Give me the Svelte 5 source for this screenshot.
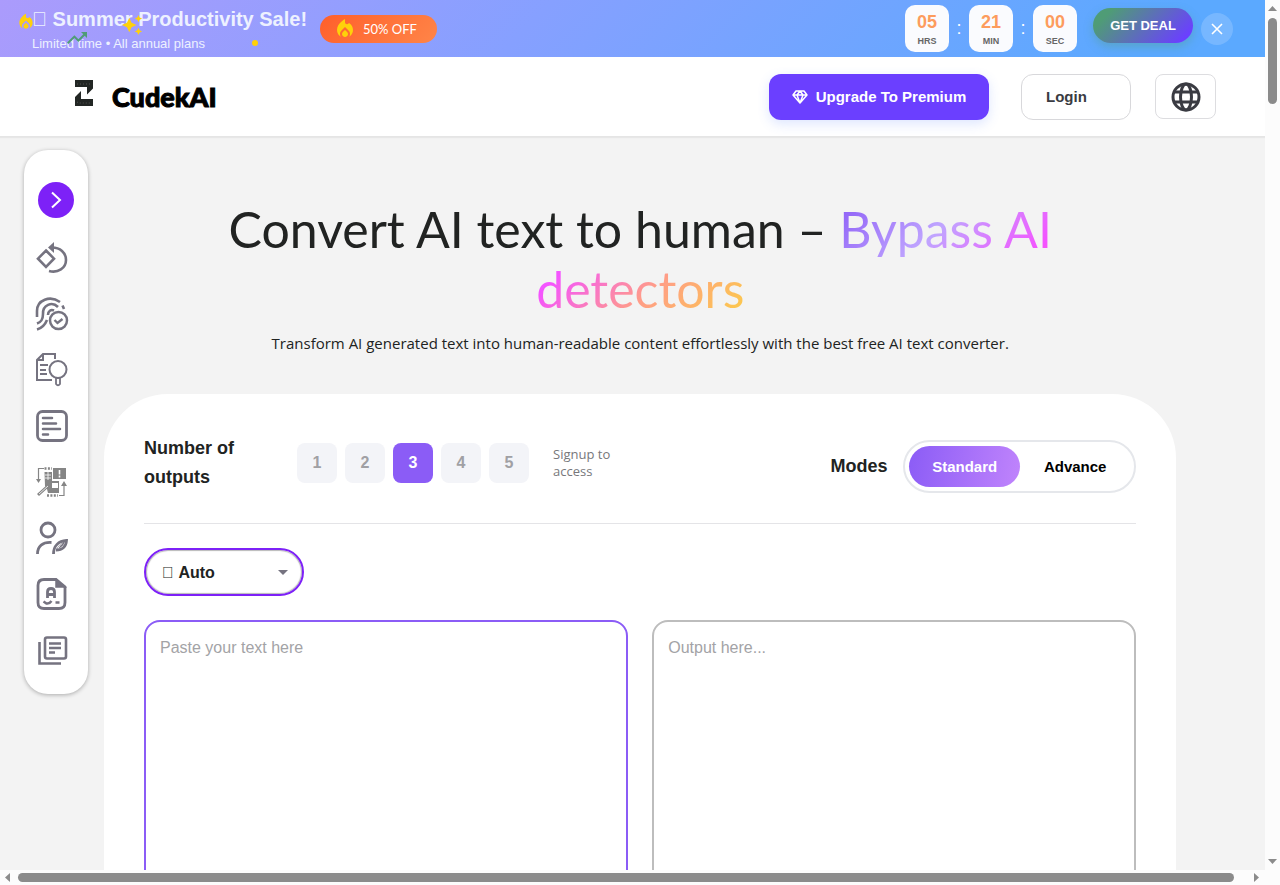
<script>
  let selected = $state(3);
  let mode = $state('Standard');
  const counts = [1, 2, 3, 4, 5];
  const countdown = [
    { value: '05', unit: 'HRS' },
    { value: '21', unit: 'MIN' },
    { value: '00', unit: 'SEC' }
  ];
</script>

{#snippet flame(size)}
  <svg width={size} height={size} viewBox="0 0 24 24" fill="#ffd10a" aria-hidden="true">
    <path d="m12 12.9-2.13 2.09c-.56.56-.87 1.29-.87 2.07C9 18.68 10.35 20 12 20s3-1.32 3-2.94c0-.78-.31-1.52-.87-2.07L12 12.9z" />
    <path d="m16 6-.44.55C14.38 8.02 12 7.19 12 5.3V2S4 6 4 13c0 2.92 1.56 5.47 3.89 6.86-.56-.79-.89-1.76-.89-2.8 0-1.32.52-2.56 1.47-3.5L12 10.1l3.53 3.47c.95.93 1.47 2.17 1.47 3.5 0 1.02-.31 1.96-.85 2.75 1.89-1.15 3.29-3.06 3.71-5.3.66-3.55-1.07-6.9-3.86-8.52z" />
  </svg>
{/snippet}

<div class="frame">
  <div class="page">
    <section class="banner">
      <div class="decor flame">{@render flame(20)}</div>
      <div class="decor sparkle">
        <svg width="22" height="22" viewBox="0 0 24 24" fill="#ffd10a" aria-hidden="true"><path d="m19 9 1.25-2.75L23 5l-2.75-1.25L19 1l-1.25 2.75L15 5l2.75 1.25L19 9zm-7.5.5L9 4 6.5 9.5 1 12l5.5 2.5L9 20l2.5-5.5L17 12l-5.500-2.500zM19 15l-1.250 2.750L15 19l2.750 1.250L19 23l1.250-2.750L23 19l-2.750-1.250L19 15z" /></svg>
      </div>
      <div class="decor trend">
        <svg width="24" height="24" viewBox="0 0 24 24" fill="#4f9c76" aria-hidden="true"><path d="m16 6 2.29 2.29-4.88 4.88-4-4L2 16.59 3.41 18l6-6 4 4 6.3-6.29L22 12V6z" /></svg>
      </div>
      <div class="decor dot"></div>

      <div class="promo">
        <strong>&#xE000; Summer Productivity Sale!</strong>
        <span>Limited time • All annual plans</span>
      </div>
      <div class="badge">{@render flame(24)}<span>50% OFF</span></div>

      <div class="countdown">
        {#each countdown as part, i}
          {#if i > 0}<span class="colon">:</span>{/if}
          <div class="tick"><b>{part.value}</b><small>{part.unit}</small></div>
        {/each}
      </div>
      <button class="deal">GET DEAL</button>
      <button class="close" aria-label="Close">
        <svg width="14" height="14" viewBox="0 0 14 14" stroke="#fff" stroke-width="1.6" aria-hidden="true"><path d="M2 2l10 10M12 2L2 12" /></svg>
      </button>
    </section>

    <header>
      <a class="brand" href="#home">
        <svg width="20" height="26" viewBox="0 0 20 26" aria-hidden="true">
          <path d="M1 0h18v8.500l-6 6V7H1z M1 26h18v-7H7v-8l-6 6z" fill="#222624" />
          <path d="M3 4h13M3 22l2 1h12" stroke="#666" stroke-width=".7" stroke-dasharray="1 2" fill="none" />
        </svg>
        <span>CudekAI</span>
      </a>
      <button class="upgrade">
        <svg width="16" height="16" viewBox="0 0 16 16" fill="none" stroke="#fff" stroke-width="1.500" stroke-linejoin="round" aria-hidden="true"><path d="M4 2h8l3 4-7 8-7-8zM1 6h14M8 2L5 6l3 8 3-8z" /></svg>
        Upgrade To Premium
      </button>
      <button class="login">Login</button>
      <button class="lang" aria-label="Language">
        <svg width="30" height="30" viewBox="0 0 30 30" fill="none" stroke="#3a3b42" stroke-width="3" aria-hidden="true"><circle cx="15" cy="15" r="13" /><ellipse cx="15" cy="15" rx="5.500" ry="13" /><path d="M3 10h24M3 20h24" /></svg>
      </button>
    </header>

    <main>
      <nav aria-label="Tools">
        <button class="expand" aria-label="Expand">
          <svg width="36" height="36" viewBox="0 0 36 36" fill="none" stroke="#fff" stroke-width="2" aria-hidden="true"><path d="M14 10.500l8 7.500-8 7.500" /></svg>
        </button>
        <a href="#humanize" aria-label="Humanize">
          <svg viewBox="0 0 32 32" aria-hidden="true"><path d="M10 8.500l8 8.200-8 8.200-8-8.200z" stroke-width="2.600" /><path d="M16 5.500c8 0 14 5 14 12.500 0 8-8 13.500-17 11" stroke-width="2.600" /><path d="M18 0v11l-6-5.500z" fill="#757380" stroke="none" /></svg>
        </a>
        <a href="#detector" aria-label="Detector">
          <svg viewBox="0 0 32 32" aria-hidden="true"><circle cx="22.500" cy="22.500" r="8.500" /><path d="M18.500 22l3 3 5-4" stroke-width="2.400" /><path d="M1 19v-6C1 2 14-3 24 4M26.500 7.500l1.500 3.500M7 16c-.5-9 9-13 15-7M12 17c0-4 3-6 6-4.500M7 16c0 6-2 8-6 9.500M11 22c-2 5-5 8-10 9.500" stroke-width="2.600" /></svg>
        </a>
        <a href="#plagiarism" aria-label="Plagiarism">
          <svg viewBox="0 0 32 32" aria-hidden="true"><path d="M19 5V0H7L1 6v20h15M7 0v6H1M4 11h8M4 16h6M4 20h7" stroke-width="2" /><circle cx="22" cy="15.500" r="8.500" stroke-width="2" /><path d="M20 24v6q2 2.500 4 0v-6z" stroke-width="1.800" /></svg>
        </a>
        <a href="#essay" aria-label="Essay">
          <svg viewBox="0 0 32 32" aria-hidden="true"><rect x="1.500" y="1.500" width="29" height="29" rx="5" stroke-width="2.800" /><path d="M7 8h9M7 13.500h13M7 19h17M7 24.500h5" stroke-width="2.500" stroke-linecap="round" /></svg>
        </a>
        <a href="#workflow" aria-label="Workflow">
          <svg viewBox="0 0 32 32" aria-hidden="true"><g fill="#858585" stroke="none"><path d="M17 2h13v11H17zM8.500 6H16v9h7v12H12l-1-4-2-3zM0 13h5l-2.500 4zM25 20h6l-3-5z" /></g><g stroke="#858585" stroke-width="1.200"><path d="M2.500 14V2.500H8M28 20v9.500h-5" /><path d="M2 29l11-10" stroke-width="3" /><path d="M8.500 2.500H16M11 29.500h11" stroke-width="2.400" stroke-dasharray="2 1.400" /></g><g stroke="#fff" stroke-width="1.200"><path d="M9 9h6M9 12h6M12 6v8" stroke-width=".8" /><path d="M23.500 4v4.500M23.500 9.500v2" stroke-width="1.600" /><path d="M3 28l9-8" stroke-width=".8" /></g><path d="M16 17h6v5h-6z" fill="#fff" stroke="none" /></svg>
        </a>
        <a href="#author" aria-label="Author">
          <svg viewBox="0 0 32 32" aria-hidden="true"><circle cx="12" cy="8" r="7" stroke-width="2.800" /><path d="M1.500 32c0-8 5-12 14-11.500" stroke-width="2.800" /><path d="M17.500 32c0-8 5-13 13-13.500-.5 7-4 9.500-10.500 9.500" stroke-width="2.800" /><path d="M20 28q3-6 9-9-1 6-9 9z" fill="#757380" stroke="none" /><path d="M22 26.500q1.500-3 4-5" stroke="#fff" stroke-width="1" /></svg>
        </a>
        <a href="#grade" aria-label="Grading">
          <svg viewBox="0 0 32 32" aria-hidden="true"><path d="M20 1.500H8q-6 0-6 6v17q0 6 6 6h15q6 0 6-6V9z" stroke-width="2.800" /><path d="M20 1.500V9h9z" fill="#757380" stroke-width="1.500" /><path d="M11.500 20v-6q0-3.500 3.500-3.500t3.500 3.500v6M11 16.500h8" stroke-width="2.800" /><path d="M7.500 23.500l3 2q3 .5 5-2.500M19.500 24.500h4" stroke-width="2.400" /></svg>
        </a>
        <a href="#library" aria-label="Library">
          <svg viewBox="0 0 32 32" aria-hidden="true"><rect x="9" y="3.500" width="21" height="21" rx="2" stroke-width="2.600" /><path d="M3.500 8v21.500H25" stroke-width="2.600" /><path d="M13 9.500h12M13 14h12M13 18.500h6" stroke-width="2.400" /></svg>
        </a>
      </nav>

      <div class="content">
        <div class="hero">
          <h1>Convert AI text to human – <span>Bypass AI detectors</span></h1>
          <p>Transform AI generated text into human-readable content effortlessly with the best free AI text converter.</p>
        </div>

        <section class="card">
          <div class="options">
            <div class="outputs">
              <h2>Number of outputs</h2>
              <div class="numbers">
                {#each counts as n}
                  <button class:active={selected === n} onclick={() => (selected = n)}>{n}</button>
                {/each}
              </div>
              <p>Signup to access</p>
            </div>
            <div class="modes">
              <h2>Modes</h2>
              <div class="switch">
                {#each ['Standard', 'Advance'] as name}
                  <button class:active={mode === name} onclick={() => (mode = name)}>{name}</button>
                {/each}
              </div>
            </div>
          </div>

          <div class="select">
            <select aria-label="Language of the text"><option>&#xE000; Auto</option></select>
            <svg width="10" height="5" viewBox="0 0 10 5" aria-hidden="true"><path d="M0 0h10L5 5z" fill="#757380" /></svg>
          </div>

          <div class="editors">
            <textarea class="input" aria-label="Your text" placeholder="Paste your text here"></textarea>
            <textarea aria-label="Output" placeholder="Output here..." readonly></textarea>
          </div>
        </section>
      </div>
    </main>
  </div>

  <div class="bar vertical" aria-hidden="true">
    <svg width="9" height="5" viewBox="0 0 9 5"><path d="M0 5h9L4.500 0z" /></svg>
    <i></i>
    <svg class="last" width="9" height="5" viewBox="0 0 9 5"><path d="M0 0h9L4.500 5z" /></svg>
  </div>
  <div class="bar horizontal" aria-hidden="true">
    <svg width="5" height="9" viewBox="0 0 5 9"><path d="M5 0v9L0 4.500z" /></svg>
    <i></i>
    <svg class="last" width="5" height="9" viewBox="0 0 5 9"><path d="M0 0v9l5-4.500z" /></svg>
  </div>
</div>

<style>
  :global(body) {
    margin: 0;
    background: #f3f3f3;
  }
  .frame,
  .frame * {
    box-sizing: border-box;
  }
  .frame {
    display: grid;
    grid-template: minmax(0, 1fr) 15px / minmax(0, 1fr) 15px;
    height: 100vh;
    background: #fcfcfc;
    color: #212322;
    font-family: 'Liberation Sans', Arial, sans-serif;
  }
  button,
  select,
  textarea {
    font-family: inherit;
    cursor: pointer;
  }
  button {
    padding: 0;
    border: 0;
    background: none;
  }
  svg {
    display: block;
    flex: none;
  }
  h1,
  h2,
  p {
    margin: 0;
  }
  .page {
    display: flex;
    flex-direction: column;
    overflow: hidden;
    background: #f3f3f3;
  }

  .banner {
    position: relative;
    flex: none;
    display: flex;
    align-items: center;
    height: 57px;
    padding: 0 32px;
    background: linear-gradient(135deg, #ab9bfc 0%, #86a0ff 42%, #5ba9ff 90%);
    color: #fff;
  }
  .decor {
    position: absolute;
  }
  .decor.flame {
    left: 16px;
    top: 12px;
  }
  .sparkle {
    left: 121px;
    top: 14px;
  }
  .trend {
    left: 65px;
    top: 26px;
  }
  .dot {
    left: 252px;
    top: 40px;
    width: 6px;
    height: 6px;
    border-radius: 50%;
    background: #ffd10a;
  }
  .promo {
    display: flex;
    flex-direction: column;
    width: 272px;
    margin-right: 16px;
    white-space: nowrap;
    color: #edf1ff;
  }
  .promo strong {
    font-size: 20px;
    line-height: 30px;
  }
  .promo span {
    font-size: 13px;
    line-height: 20px;
  }
  .badge {
    display: flex;
    align-items: center;
    gap: 6px;
    height: 28px;
    padding: 0 20px 0 13px;
    border-radius: 14px;
    background: linear-gradient(135deg, #ff5f2b, #ff8548);
    font: 13px/28px Lato, sans-serif;
    white-space: nowrap;
  }
  .countdown {
    display: flex;
    align-items: center;
    margin-left: auto;
  }
  .colon {
    width: 20px;
    text-align: center;
    font-size: 18px;
  }
  .tick {
    display: flex;
    flex-direction: column;
    align-items: center;
    width: 44px;
    height: 47px;
    padding-top: 6px;
    border-radius: 10px;
    background: #fafbfe;
  }
  .tick b {
    color: #fd9c5d;
    font-size: 18px;
    line-height: 22px;
  }
  .tick small {
    color: #666;
    font-size: 9px;
    line-height: 16px;
    font-weight: 700;
  }
  .deal {
    align-self: flex-start;
    width: 100px;
    height: 35px;
    margin: 8px 8px 0 16px;
    border-radius: 18px;
    background: linear-gradient(135deg, #4f9c76 15%, #6b3fff 90%);
    box-shadow: 0 4px 10px #4f9c7660;
    color: #fff;
    font-size: 13px;
    font-weight: 700;
  }
  .close {
    display: grid;
    place-items: center;
    width: 32px;
    height: 32px;
    border-radius: 50%;
    background: #ffffff2c;
  }

  header {
    position: relative;
    flex: none;
    display: flex;
    align-items: center;
    height: 80px;
    padding: 0 49px 0 74px;
    border-bottom: 1px solid #e5e5e5;
    background: #fff;
    box-shadow: 0 1px 1px #0000000c;
  }
  .brand {
    display: flex;
    align-items: flex-start;
    gap: 18px;
    margin-right: auto;
    color: #000;
    font: 900 27px/34px Lato, sans-serif;
    -webkit-text-stroke: 1px #000;
    text-decoration: none;
  }
  .upgrade {
    display: flex;
    align-items: center;
    justify-content: center;
    gap: 8px;
    width: 220px;
    height: 46px;
    margin-right: 32px;
    border-radius: 12px;
    background: #6b3fff;
    box-shadow: 0 4px 12px #5078ff30;
    color: #fff;
    font-size: 15px;
    font-weight: 700;
  }
  .login {
    width: 110px;
    height: 46px;
    margin-right: 24px;
    padding-left: 24px;
    border: 1px solid #d8d8db;
    border-radius: 12px;
    color: #3a3b42;
    font-size: 15px;
    font-weight: 700;
    text-align: left;
  }
  .lang {
    display: grid;
    place-items: center;
    width: 61px;
    height: 45px;
    border: 1px solid #dddde0;
    border-radius: 8px;
  }

  main {
    flex: 1;
    display: grid;
    grid-template-columns: 64px minmax(0, 1fr);
    align-items: start;
    gap: 16px;
    padding: 0 7% 0 24px;
  }
  nav {
    display: flex;
    flex-direction: column;
    align-items: center;
    gap: 24px;
    margin-top: 13px;
    padding: 32px 0 28px;
    border-radius: 24px;
    background: #fff;
    box-shadow: 0 1px 4px #0000004d;
  }
  nav a {
    margin-right: 8px;
  }
  nav a svg {
    width: 32px;
    height: 32px;
    overflow: visible;
    fill: none;
    stroke: #757380;
    stroke-width: 2.5px;
  }
  .expand {
    border-radius: 50%;
    background: #7d21f7;
  }

  .hero {
    padding: 62px 0 39px;
    text-align: center;
  }
  h1 {
    max-width: 860px;
    margin: 0 auto 12px;
    font: 400 50px/60px Lato, sans-serif;
  }
  h1 span {
    background: linear-gradient(135deg, #8b5cf6 0%, #c0a5ff 27%, #f453ff 52%, #ff9e86 75%, #fcc94c 98%);
    background-clip: text;
    -webkit-background-clip: text;
    color: transparent;
  }
  .hero p {
    font: 15px/24px 'Open Sans', sans-serif;
  }

  .card {
    min-height: 900px;
    padding: 40px;
    border-radius: 64px;
    background: #fff;
  }
  .options {
    display: flex;
    justify-content: space-between;
    padding-bottom: 30px;
    border-bottom: 1px solid #e4e4e7;
  }
  .outputs,
  .modes {
    display: flex;
    align-items: center;
  }
  .outputs {
    align-self: flex-start;
  }
  .modes {
    gap: 16px;
    padding-top: 6px;
  }
  h2 {
    font-size: 18px;
    line-height: 29px;
  }
  .outputs h2 {
    width: 137px;
    padding-right: 32px;
    margin-right: 16px;
  }
  .numbers {
    display: flex;
    gap: 8px;
    margin-right: 24px;
  }
  .numbers button {
    width: 40px;
    height: 40px;
    border-radius: 8px;
    background: #f3f4f8;
    color: #a0a0a4;
    font-size: 16px;
    font-weight: 700;
  }
  .numbers .active {
    background: #8b5cf6;
    color: #fff;
  }
  .outputs p {
    width: 64px;
    color: #77777b;
    font: 13px/17px 'Open Sans', sans-serif;
  }
  .switch {
    display: flex;
    width: 233px;
    height: 53px;
    padding: 4px;
    border: 2px solid #e5e7eb;
    border-radius: 27px;
  }
  .switch button {
    width: 112px;
    height: 41px;
    border-radius: 21px;
    color: #000;
    font-size: 15px;
    font-weight: 700;
  }
  .switch .active {
    background: linear-gradient(100deg, #8b5cf6, #c084fc);
    color: #fff;
  }

  .select {
    position: relative;
    width: 160px;
    margin: 24px 0;
  }
  select {
    display: block;
    width: 100%;
    height: 48px;
    padding: 0 16px;
    appearance: none;
    border: 2px solid #7d21f7;
    border-radius: 24px;
    background: #fff;
    box-shadow: inset 0 0 1px 1px #b8b8b8;
    color: #212322;
    font-size: 16px;
    font-weight: 700;
  }
  .select svg {
    position: absolute;
    right: 16px;
    top: 22px;
    pointer-events: none;
  }
  .editors {
    display: grid;
    grid-template-columns: 1fr 1fr;
    gap: 24px;
  }
  textarea {
    height: 480px;
    padding: 14px;
    resize: none;
    outline: 0;
    border: 2px solid #bdbdbd;
    border-radius: 16px;
    background: #fff;
    font-size: 16px;
    line-height: 23px;
    cursor: text;
  }
  textarea.input {
    border-color: #8b5cf6;
  }
  textarea::placeholder {
    color: #a3a3a6;
  }

  .bar {
    display: flex;
    align-items: center;
    background: #fcfcfc;
  }
  .bar svg {
    fill: #8b8b8b;
  }
  .bar i {
    border-radius: 5px;
    background: #8b8b8b;
  }
  .bar .last {
    margin-top: auto;
  }
  .vertical {
    flex-direction: column;
    gap: 7px;
    padding: 6px 0;
  }
  .vertical i {
    width: 9px;
    height: 10%;
  }
  .horizontal {
    gap: 8px;
    padding: 0 6px 0 5px;
  }
  .horizontal i {
    width: 97%;
    height: 9px;
  }
  .horizontal .last {
    margin: 0 0 0 auto;
  }
</style>
